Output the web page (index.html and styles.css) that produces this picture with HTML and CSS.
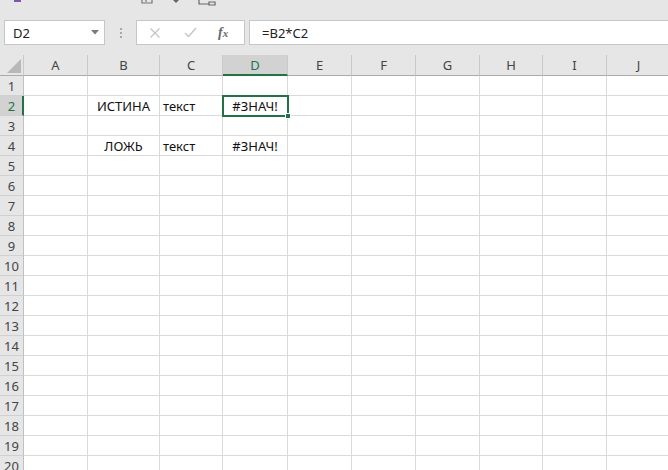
FILE: index.html
```html
<!DOCTYPE html>
<html lang="ru">
<head>
<meta charset="utf-8">
<title>Excel</title>
<link rel="stylesheet" href="styles.css">
</head>
<body>
<div class="top">
  <div class="qat">
    <span class="qi qi-purple"></span>
    <svg class="qi qi-undo" width="12" height="4" viewBox="0 0 12 4"><path d="M1 0v3h10V0" fill="none" stroke="#777" stroke-width="1.2"/><path d="M5 0v2" stroke="#777" stroke-width="1.2"/></svg>
    <svg class="qi qi-down" width="6" height="4" viewBox="0 0 6 4"><path d="M0 0h6L3 3z" fill="#666"/></svg>
    <svg class="qi qi-sheet" width="18" height="6" viewBox="0 0 18 6"><path d="M1 0v4h10" fill="none" stroke="#666" stroke-width="1.2"/><path d="M11 2h6v3h-6z" fill="none" stroke="#666" stroke-width="1.2"/></svg>
  </div>
  <div class="fbar">
    <div class="namebox">
      <span class="nb-text">D2</span>
      <svg class="nb-arrow" width="8" height="5" viewBox="0 0 8 5"><path d="M0 0h8L4 4.5z" fill="#7a7a7a"/></svg>
    </div>
    <div class="dots"><span></span><span></span><span></span></div>
    <div class="fxbox">
      <svg class="fx-icon" width="12" height="12" viewBox="0 0 12 12"><path d="M1.5 1.5l9 9M10.5 1.5l-9 9" stroke="#c4c4c4" stroke-width="1.3"/></svg>
      <svg class="fx-icon" width="13" height="11" viewBox="0 0 13 11"><path d="M1 6l3.5 3.5L12 1" fill="none" stroke="#c4c4c4" stroke-width="1.4"/></svg>
      <span class="fx-label">f<span class="fx-x">x</span></span>
    </div>
    <div class="formula">=B2*C2</div>
  </div>
</div>
<div class="sheet">
  <div class="hc corner"><svg width="14" height="14" viewBox="0 0 14 14"><path d="M14 0v14H0z" fill="#b8b8b8"/></svg></div>
  <div class="hc">A</div><div class="hc">B</div><div class="hc">C</div><div class="hc hc-sel">D</div><div class="hc">E</div><div class="hc">F</div><div class="hc">G</div><div class="hc">H</div><div class="hc">I</div><div class="hc">J</div>

  <div class="rh">1</div><div class="c"></div><div class="c"></div><div class="c"></div><div class="c"></div><div class="c"></div><div class="c"></div><div class="c"></div><div class="c"></div><div class="c"></div><div class="c"></div>
  <div class="rh rh-sel">2</div><div class="c"></div><div class="c center">ИСТИНА</div><div class="c">текст</div><div class="c center active">#ЗНАЧ!<span class="sel"><span class="handle"></span></span></div><div class="c"></div><div class="c"></div><div class="c"></div><div class="c"></div><div class="c"></div><div class="c"></div>
  <div class="rh">3</div><div class="c"></div><div class="c"></div><div class="c"></div><div class="c"></div><div class="c"></div><div class="c"></div><div class="c"></div><div class="c"></div><div class="c"></div><div class="c"></div>
  <div class="rh">4</div><div class="c"></div><div class="c center">ЛОЖЬ</div><div class="c">текст</div><div class="c center">#ЗНАЧ!</div><div class="c"></div><div class="c"></div><div class="c"></div><div class="c"></div><div class="c"></div><div class="c"></div>
  <div class="rh">5</div><div class="c"></div><div class="c"></div><div class="c"></div><div class="c"></div><div class="c"></div><div class="c"></div><div class="c"></div><div class="c"></div><div class="c"></div><div class="c"></div>
  <div class="rh">6</div><div class="c"></div><div class="c"></div><div class="c"></div><div class="c"></div><div class="c"></div><div class="c"></div><div class="c"></div><div class="c"></div><div class="c"></div><div class="c"></div>
  <div class="rh">7</div><div class="c"></div><div class="c"></div><div class="c"></div><div class="c"></div><div class="c"></div><div class="c"></div><div class="c"></div><div class="c"></div><div class="c"></div><div class="c"></div>
  <div class="rh">8</div><div class="c"></div><div class="c"></div><div class="c"></div><div class="c"></div><div class="c"></div><div class="c"></div><div class="c"></div><div class="c"></div><div class="c"></div><div class="c"></div>
  <div class="rh">9</div><div class="c"></div><div class="c"></div><div class="c"></div><div class="c"></div><div class="c"></div><div class="c"></div><div class="c"></div><div class="c"></div><div class="c"></div><div class="c"></div>
  <div class="rh">10</div><div class="c"></div><div class="c"></div><div class="c"></div><div class="c"></div><div class="c"></div><div class="c"></div><div class="c"></div><div class="c"></div><div class="c"></div><div class="c"></div>
  <div class="rh">11</div><div class="c"></div><div class="c"></div><div class="c"></div><div class="c"></div><div class="c"></div><div class="c"></div><div class="c"></div><div class="c"></div><div class="c"></div><div class="c"></div>
  <div class="rh">12</div><div class="c"></div><div class="c"></div><div class="c"></div><div class="c"></div><div class="c"></div><div class="c"></div><div class="c"></div><div class="c"></div><div class="c"></div><div class="c"></div>
  <div class="rh">13</div><div class="c"></div><div class="c"></div><div class="c"></div><div class="c"></div><div class="c"></div><div class="c"></div><div class="c"></div><div class="c"></div><div class="c"></div><div class="c"></div>
  <div class="rh">14</div><div class="c"></div><div class="c"></div><div class="c"></div><div class="c"></div><div class="c"></div><div class="c"></div><div class="c"></div><div class="c"></div><div class="c"></div><div class="c"></div>
  <div class="rh">15</div><div class="c"></div><div class="c"></div><div class="c"></div><div class="c"></div><div class="c"></div><div class="c"></div><div class="c"></div><div class="c"></div><div class="c"></div><div class="c"></div>
  <div class="rh">16</div><div class="c"></div><div class="c"></div><div class="c"></div><div class="c"></div><div class="c"></div><div class="c"></div><div class="c"></div><div class="c"></div><div class="c"></div><div class="c"></div>
  <div class="rh">17</div><div class="c"></div><div class="c"></div><div class="c"></div><div class="c"></div><div class="c"></div><div class="c"></div><div class="c"></div><div class="c"></div><div class="c"></div><div class="c"></div>
  <div class="rh">18</div><div class="c"></div><div class="c"></div><div class="c"></div><div class="c"></div><div class="c"></div><div class="c"></div><div class="c"></div><div class="c"></div><div class="c"></div><div class="c"></div>
  <div class="rh">19</div><div class="c"></div><div class="c"></div><div class="c"></div><div class="c"></div><div class="c"></div><div class="c"></div><div class="c"></div><div class="c"></div><div class="c"></div><div class="c"></div>
  <div class="rh">20</div><div class="c"></div><div class="c"></div><div class="c"></div><div class="c"></div><div class="c"></div><div class="c"></div><div class="c"></div><div class="c"></div><div class="c"></div><div class="c"></div>
</div>
</body>
</html>
```
FILE: styles.css
```css
html, body {
  margin: 0;
  padding: 0;
}
body {
  width: 668px;
  height: 470px;
  overflow: hidden;
  background: #ffffff;
  font-family: "Noto Sans", "Open Sans", sans-serif;
  color: #222222;
}

/* ---------- top band ---------- */
.top {
  background: #e6e6e6;
  height: 55px;
}
.qat {
  height: 20px;
  display: flex;
  align-items: flex-start;
}
.qi {
  display: block;
}
.qi-purple {
  width: 7px;
  height: 2px;
  background: #7e57a8;
  margin-left: 14px;
}
.qi-undo {
  margin-left: 120px;
}
.qi-down {
  margin-left: 20px;
}
.qi-sheet {
  margin-left: 19px;
}

.fbar {
  display: flex;
  height: 25px;
}
.namebox {
  margin-left: 4px;
  width: 101px;
  box-sizing: border-box;
  border: 1px solid #c6c6c6;
  background: #ffffff;
  display: flex;
  align-items: center;
  justify-content: space-between;
  padding: 0 5px 0 8px;
  font-size: 13px;
}
.nb-arrow {
  display: block;
}
.dots {
  width: 31px;
  display: flex;
  flex-direction: column;
  align-items: center;
  justify-content: center;
  gap: 2px;
}
.dots span {
  width: 2px;
  height: 2px;
  background: #a8a8a8;
}
.fxbox {
  width: 109px;
  box-sizing: border-box;
  border: 1px solid #c6c6c6;
  background: #ffffff;
  display: flex;
  align-items: center;
  padding-left: 12px;
  gap: 23px;
}
.fx-icon {
  display: block;
}
.fx-label {
  font-family: "Liberation Serif", "DejaVu Serif", serif;
  font-style: italic;
  font-weight: bold;
  font-size: 14px;
  color: #6a6a6a;
  margin-left: -2px;
}
.fx-x {
  font-size: 11px;
}
.formula {
  flex: 1;
  margin-left: 4px;
  box-sizing: border-box;
  border-top: 1px solid #c6c6c6;
  border-bottom: 1px solid #c6c6c6;
  border-left: 1px solid #c6c6c6;
  background: #ffffff;
  display: flex;
  align-items: center;
  padding-left: 12px;
  font-size: 13px;
}

/* ---------- sheet ---------- */
.sheet {
  display: grid;
  grid-template-columns: 24px 64px 72px 63px 65px 64px 64px 64px 63px 64px 64px;
  grid-template-rows: 21px;
  grid-auto-rows: 20px;
  font-size: 13px;
}
.hc {
  background: #e6e6e6;
  box-sizing: border-box;
  border-right: 1px solid #c9c9c9;
  border-bottom: 1px solid #ababab;
  display: flex;
  align-items: center;
  justify-content: center;
  color: #444444;
  font-size: 13px;
}
.corner {
  align-items: flex-end;
  justify-content: flex-end;
  padding: 0 2px 2px 0;
}
.corner svg {
  display: block;
}
.hc-sel {
  background: #d2d2d2;
  color: #217346;
  border-bottom: 2px solid #217346;
  padding-top: 1px;
}
.rh {
  background: #e6e6e6;
  box-sizing: border-box;
  border-right: 1px solid #c0c0c0;
  border-bottom: 1px solid #d0d0d0;
  display: flex;
  align-items: center;
  justify-content: center;
  color: #444444;
  font-size: 13px;
}
.rh-sel {
  background: #d2d2d2;
  color: #217346;
  border-right: 2px solid #217346;
  padding-left: 1px;
}
.c {
  box-sizing: border-box;
  border-right: 1px solid #dadada;
  border-bottom: 1px solid #dadada;
  display: flex;
  align-items: center;
  padding-left: 3px;
  white-space: nowrap;
  color: #111111;
}
.center {
  justify-content: center;
  padding-left: 0;
}
.active {
  position: relative;
}
.sel {
  position: absolute;
  left: -1px;
  top: -1px;
  width: 67px;
  height: 22px;
  box-sizing: border-box;
  border: 2px solid #217346;
}
.handle {
  position: absolute;
  right: -4px;
  bottom: -4px;
  width: 6px;
  height: 6px;
  box-sizing: border-box;
  background: #217346;
  border: 1px solid #ffffff;
}
```
